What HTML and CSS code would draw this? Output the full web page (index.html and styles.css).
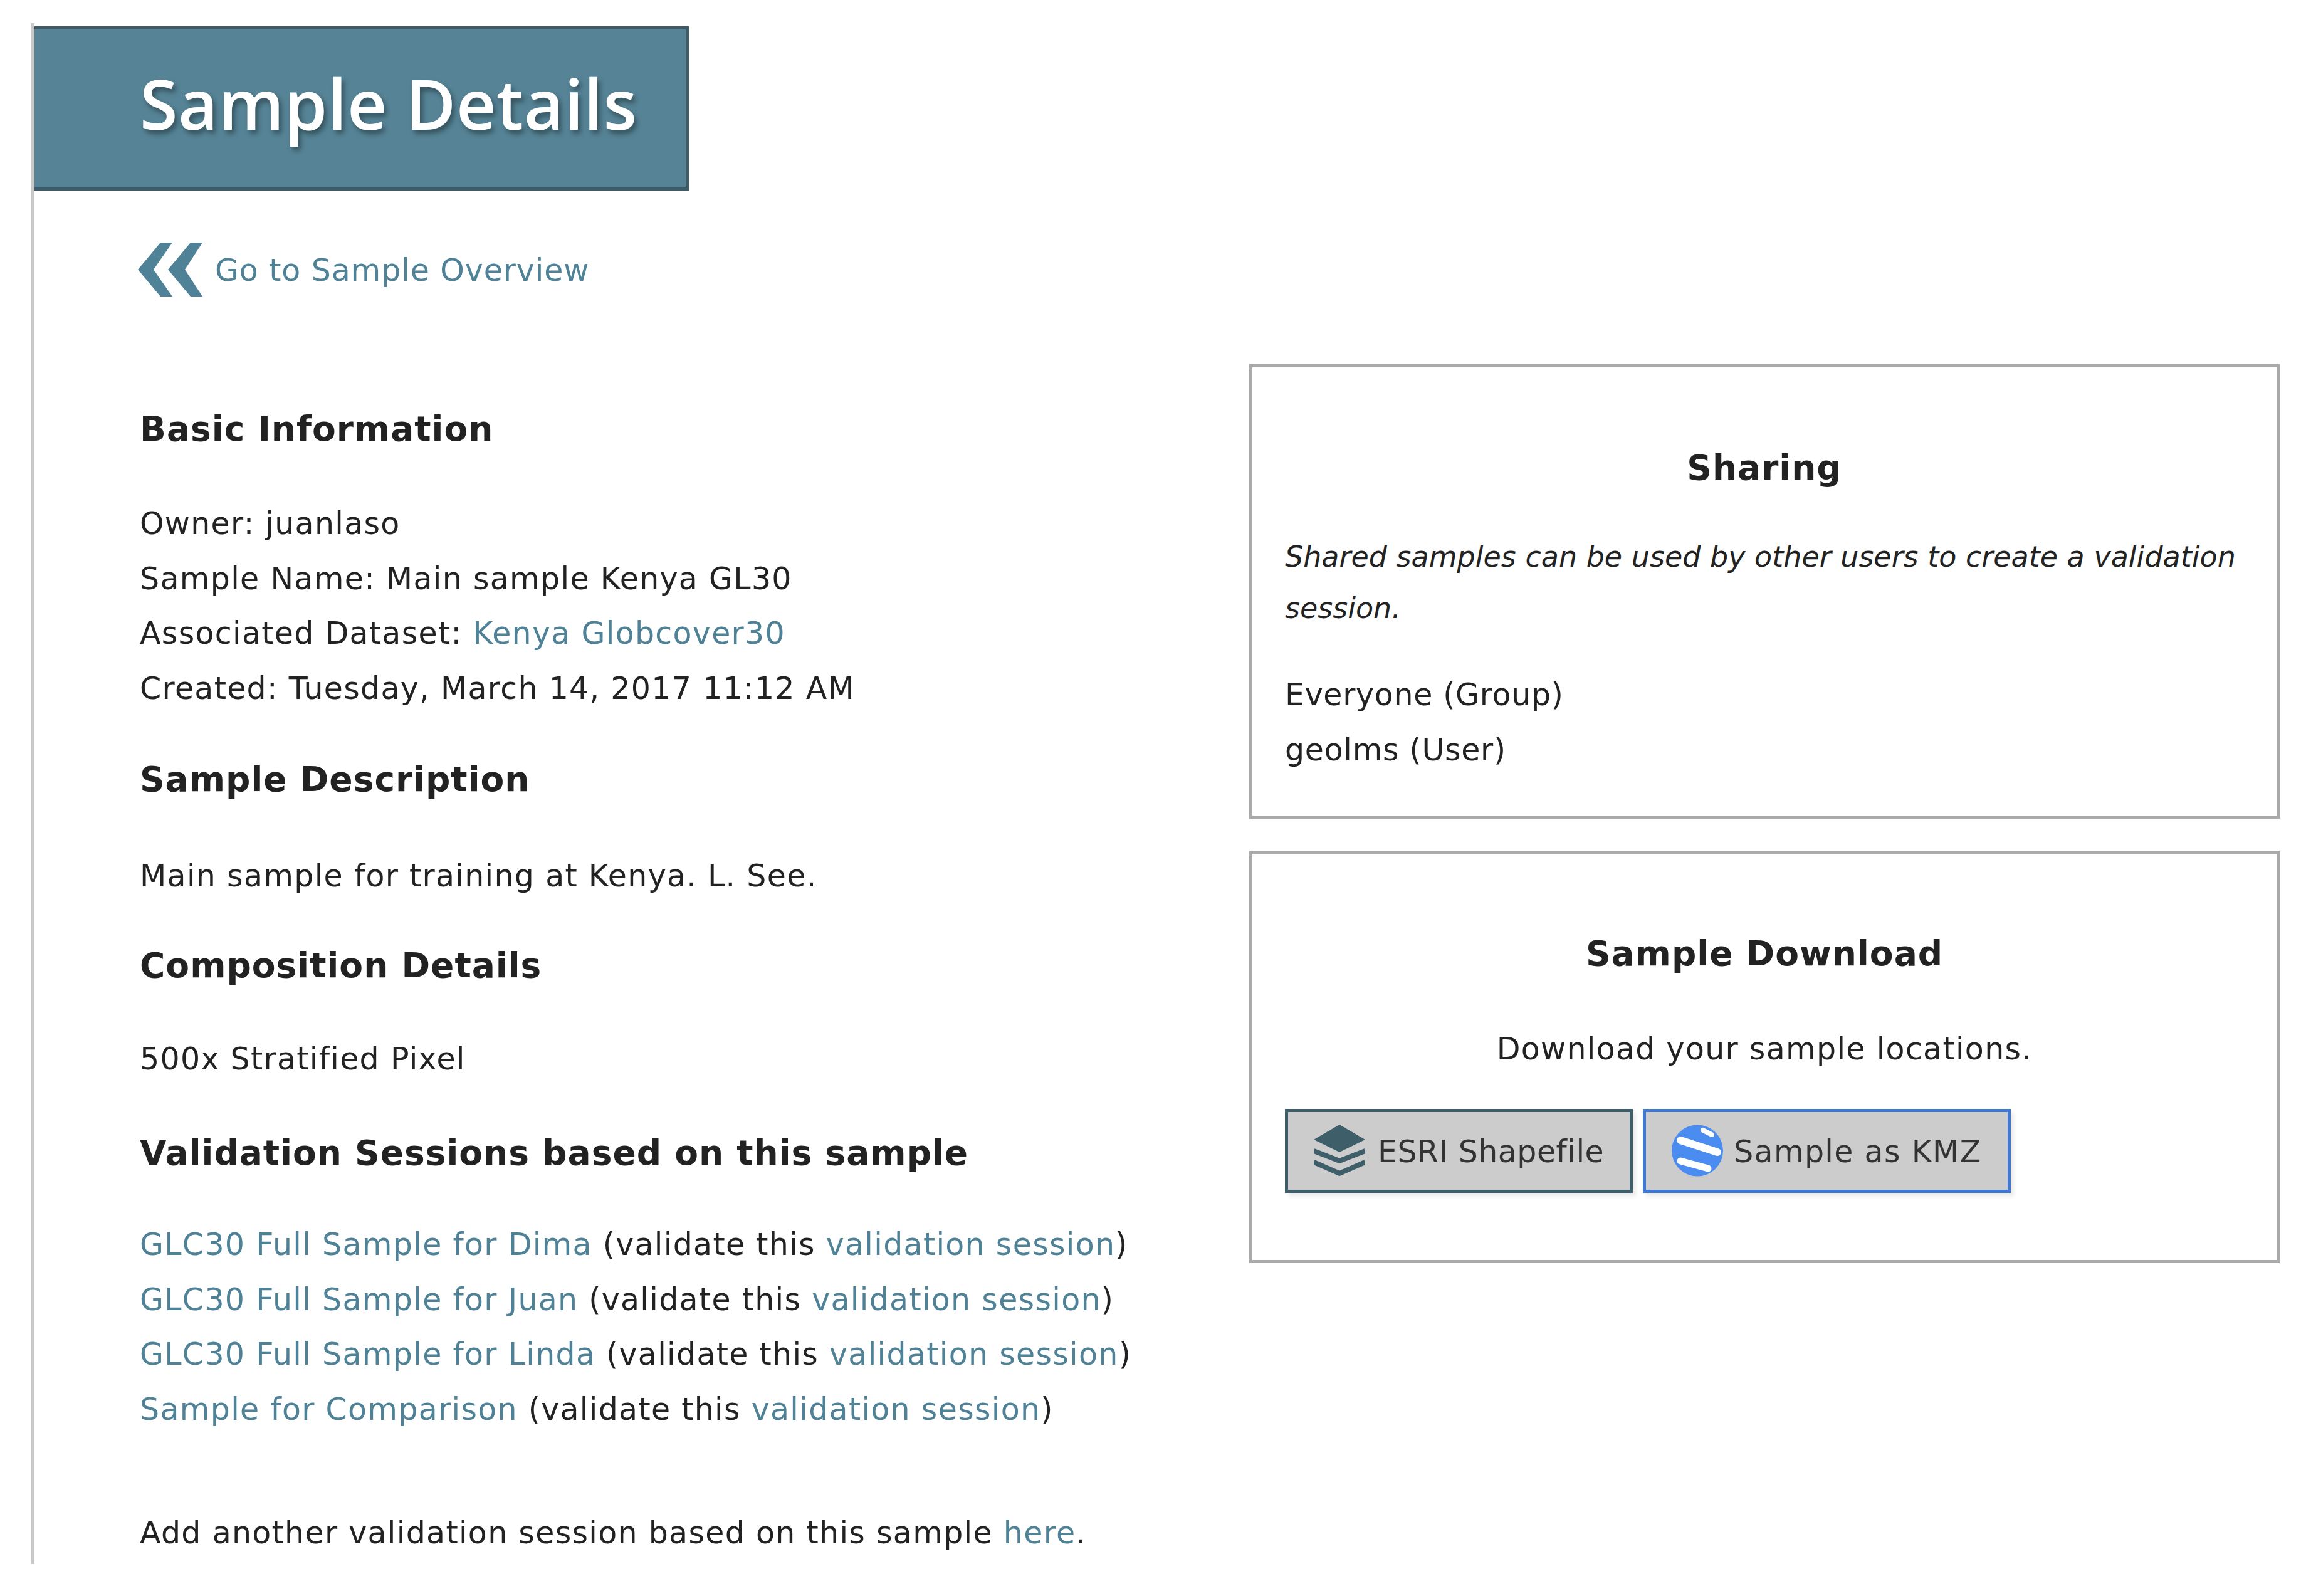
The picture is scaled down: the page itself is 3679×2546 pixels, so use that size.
FILE: index.html
```html
<!DOCTYPE html>
<html lang="en">
<head>
  <meta charset="UTF-8">
  <title>Sample Details</title>
  <link rel="stylesheet" href="styles.css">
</head>
<body>

<div class="page">
  <div class="page-title"><h1>Sample Details</h1></div>

  <a class="back-link" href="#">
    <svg class="back-icon" viewBox="0 0 103 86">
      <polygon points="36,0 55,0 25,43 55,86 36,86 0,43"/>
      <polygon points="84,0 103,0 75,43 103,86 84,86 48,43"/>
    </svg>
    <span class="label">Go to Sample Overview</span>
  </a>

  <div class="columns">
    <div class="main-col">
      <h2 class="first">Basic Information</h2>
      <p>Owner: juanlaso</p>
      <p>Sample Name: Main sample Kenya GL30</p>
      <p>Associated Dataset: <a href="#">Kenya Globcover30</a></p>
      <p>Created: Tuesday, March 14, 2017 11:12 AM</p>

      <h2 class="description-title">Sample Description</h2>
      <p>Main sample for training at Kenya. L. See.</p>

      <h2 class="composition-title">Composition Details</h2>
      <p>500x Stratified Pixel</p>

      <h2 class="sessions-title">Validation Sessions based on this sample</h2>
      <p><a href="#">GLC30 Full Sample for Dima</a> (validate this <a href="#">validation session</a>)</p>
      <p><a href="#">GLC30 Full Sample for Juan</a> (validate this <a href="#">validation session</a>)</p>
      <p><a href="#">GLC30 Full Sample for Linda</a> (validate this <a href="#">validation session</a>)</p>
      <p><a href="#">Sample for Comparison</a> (validate this <a href="#">validation session</a>)</p>

      <p class="add-session">Add another validation session based on this sample <a href="#">here</a>.</p>
    </div>

    <div class="side-col">
      <div class="box sharing">
        <h2 class="first">Sharing</h2>
        <p class="note">Shared samples can be used by other users to create a validation session.</p>
        <p>Everyone (Group)</p>
        <p>geolms (User)</p>
      </div>

      <div class="box download">
        <h2 class="first">Sample Download</h2>
        <p class="download-text">Download your sample locations.</p>
        <div class="buttons">
          <a class="btn" href="#">
            <svg class="btn-icon" viewBox="0 0 82 83">
              <polygon fill="#3e5f6a" points="41,0 82,24 41,44 0,24"/>
              <polyline fill="none" stroke="#3e5f6a" stroke-width="8" points="0,42 41,58 82,42"/>
              <polyline fill="none" stroke="#3e5f6a" stroke-width="8" points="0,60 41,78 82,60"/>
            </svg>
            <span class="label">ESRI Shapefile</span>
          </a>
          <a class="btn btn-blue" href="#">
            <svg class="btn-icon" viewBox="0 0 82 83">
              <circle cx="41" cy="41.5" r="41" fill="#4a8cf0"/>
              <path d="M50 9 L64 16" stroke="#fff" stroke-width="8" stroke-linecap="round" fill="none"/>
              <path d="M14 25 L73 44" stroke="#fff" stroke-width="12" stroke-linecap="round" fill="none"/>
              <path d="M14 58 L58 70" stroke="#fff" stroke-width="11" stroke-linecap="round" fill="none"/>
            </svg>
            <span class="label">Sample as KMZ</span>
          </a>
        </div>
      </div>
    </div>
  </div>
</div>

</body>
</html>
```

FILE: styles.css
```css
body {
  margin: 0;
  background-color: #fff;
  color: #222;
  font-family: "DejaVu Sans", sans-serif;
  font-size: 49px;
  line-height: 87.5px;
  letter-spacing: 1.3px;
}
a {
  color: #4f8296;
  text-decoration: none;
}
p {
  margin: 0;
}
h1 {
  margin: 0 0 18px 0;
  font-family: "Open Sans", sans-serif;
  font-size: 110px;
  font-weight: 600;
  line-height: 1;
  letter-spacing: 0.5px;
  color: #fff;
  text-shadow: 4px 6px 8px rgba(0, 0, 0, 0.4);
}
h2 {
  margin: 59px 0 62px 0;
  font-size: 55px;
  font-weight: bold;
  line-height: 88px;
  letter-spacing: 1px;
  color: #222;
}
h2.first {
  margin-top: 0;
  margin-bottom: 64px;
}
.description-title {
  margin: 57px 0 67px 0;
}
.composition-title {
  margin: 54px 0 62px 0;
}
.sessions-title {
  margin: 62px 0 59px 0;
}
.page {
  margin: 37px 0 0 50px;
  width: 3587px;
  height: 2458px;
  border-left: 5px solid #c8c8c8;
  box-sizing: border-box;
  padding-top: 5px;
}
.page-title {
  display: flex;
  align-items: center;
  width: 1044px;
  height: 262px;
  box-sizing: border-box;
  padding-left: 168px;
  background-color: #568496;
  border: 5px solid #3e5b68;
  border-left: none;
}
.back-link {
  display: flex;
  align-items: center;
  gap: 20px;
  margin: 83px 0 0 165px;
  height: 86px;
  letter-spacing: 0.9px;
}
.back-icon {
  width: 103px;
  height: 86px;
  fill: #4f8296;
}
.label {
  padding-top: 4px;
}
.columns {
  display: flex;
  justify-content: space-between;
  margin-top: 108px;
}
.main-col {
  padding: 59px 0 0 168px;
}
.add-session {
  margin-top: 110px;
}
.side-col {
  width: 1644px;
}
.box {
  border: 5px solid #aaa;
  padding: 0 52px;
}
.box h2 {
  text-align: center;
}
.sharing {
  padding-top: 116px;
  padding-bottom: 61px;
  margin-bottom: 51px;
  letter-spacing: 0.7px;
}
.sharing h2.first {
  margin-bottom: 57px;
}
.note {
  font-size: 46px;
  font-style: italic;
  line-height: 82px;
  letter-spacing: 0;
  margin-bottom: 54px;
}
.download {
  padding-top: 115px;
  padding-bottom: 107px;
}
.download h2.first {
  margin-bottom: 65px;
}
.download-text {
  text-align: center;
  margin-bottom: 51px;
}
.buttons {
  display: flex;
  gap: 16px;
}
.btn {
  display: flex;
  align-items: center;
  gap: 20px;
  height: 134px;
  box-sizing: border-box;
  padding: 0 41px;
  background-color: #ccc;
  color: #333;
  letter-spacing: 0.5px;
  border: 5px solid #3e5f6a;
  box-shadow: 5px 6px 6px rgba(0, 0, 0, 0.08);
}
.btn-blue {
  gap: 17px;
  letter-spacing: 1.3px;
  border-color: #4077d0;
}
.btn-icon {
  width: 82px;
  height: 83px;
}
```
